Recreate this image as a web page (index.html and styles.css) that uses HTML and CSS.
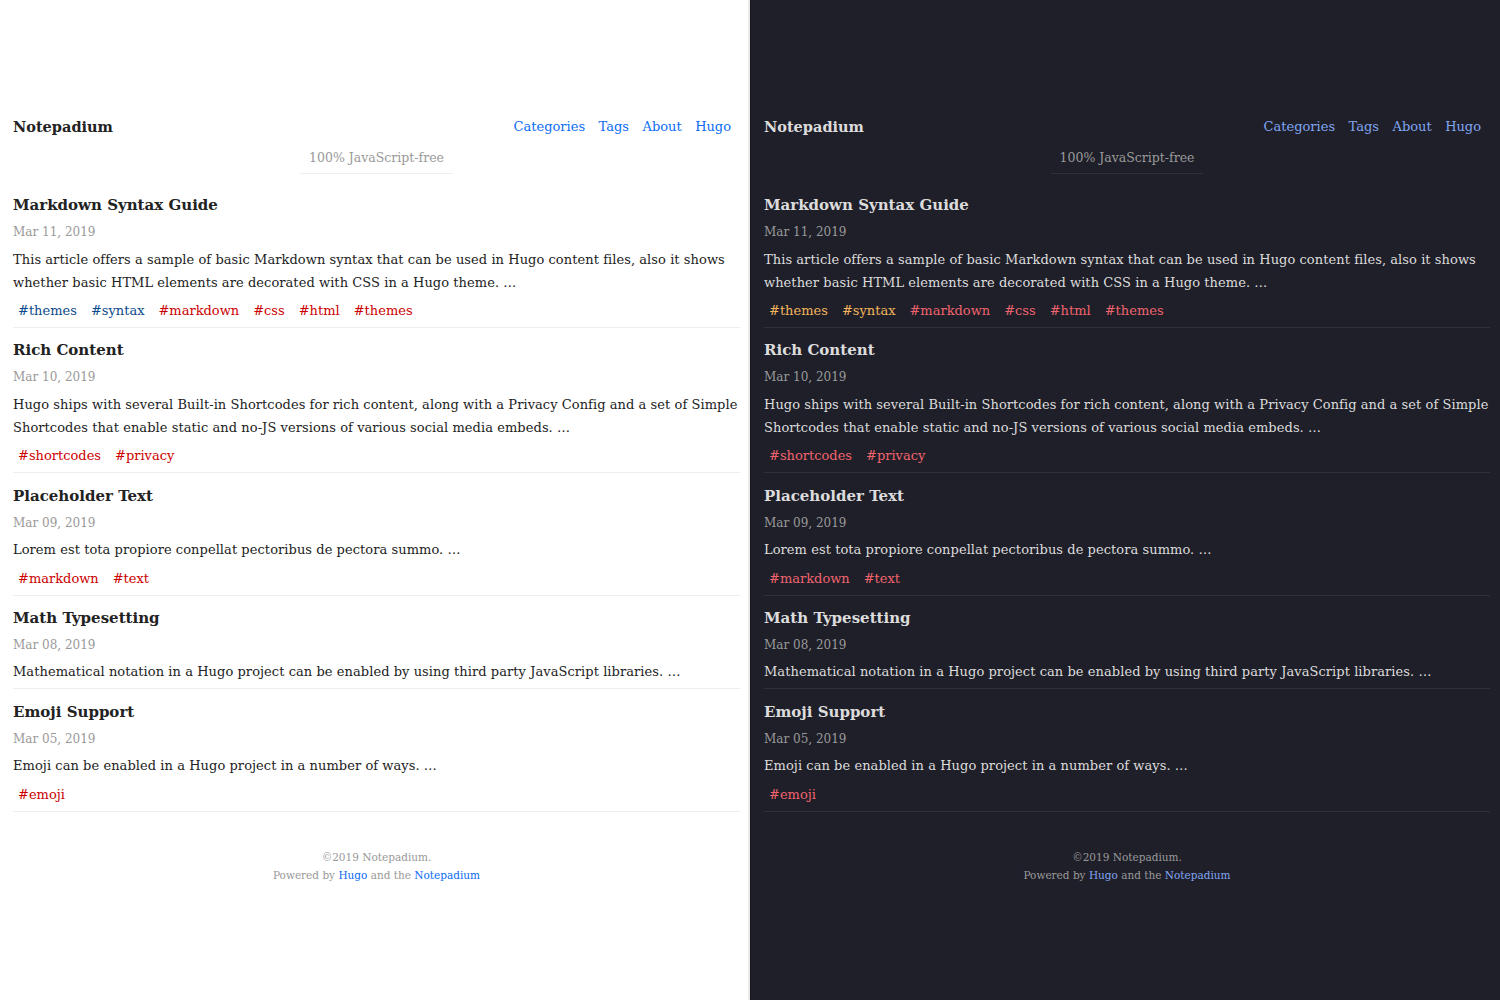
FILE: index.html
```html
<!DOCTYPE html>
<html lang="en">
<head>
<meta charset="utf-8">
<title>Notepadium</title>
<link rel="stylesheet" href="styles.css">
</head>
<body>
<div class="screens">
  <div class="panel light">
    <header class="site-header">
      <a class="brand" href="#">Notepadium</a>
      <nav class="nav">
        <a href="#">Categories</a><a href="#">Tags</a><a href="#">About</a><a href="#">Hugo</a>
      </nav>
    </header>
    <div class="tagline"><span>100% JavaScript-free</span></div>
    <main class="posts">
      <article class="post">
        <h2 class="post-title">Markdown Syntax Guide</h2>
        <div class="post-date">Mar 11, 2019</div>
        <p class="post-summary">This article offers a sample of basic Markdown syntax that can be used in Hugo content files, also it shows whether basic HTML elements are decorated with CSS in a Hugo theme. …</p>
        <div class="post-tags"><a class="tag cat" href="#">#themes</a><a class="tag cat" href="#">#syntax</a><a class="tag" href="#">#markdown</a><a class="tag" href="#">#css</a><a class="tag" href="#">#html</a><a class="tag" href="#">#themes</a></div>
      </article>
      <article class="post">
        <h2 class="post-title">Rich Content</h2>
        <div class="post-date">Mar 10, 2019</div>
        <p class="post-summary">Hugo ships with several Built-in Shortcodes for rich content, along with a Privacy Config and a set of Simple Shortcodes that enable static and no-JS versions of various social media embeds. …</p>
        <div class="post-tags"><a class="tag" href="#">#shortcodes</a><a class="tag" href="#">#privacy</a></div>
      </article>
      <article class="post">
        <h2 class="post-title">Placeholder Text</h2>
        <div class="post-date">Mar 09, 2019</div>
        <p class="post-summary">Lorem est tota propiore conpellat pectoribus de pectora summo. …</p>
        <div class="post-tags"><a class="tag" href="#">#markdown</a><a class="tag" href="#">#text</a></div>
      </article>
      <article class="post no-tags">
        <h2 class="post-title">Math Typesetting</h2>
        <div class="post-date">Mar 08, 2019</div>
        <p class="post-summary">Mathematical notation in a Hugo project can be enabled by using third party JavaScript libraries. …</p>
      </article>
      <article class="post">
        <h2 class="post-title">Emoji Support</h2>
        <div class="post-date">Mar 05, 2019</div>
        <p class="post-summary">Emoji can be enabled in a Hugo project in a number of ways. …</p>
        <div class="post-tags"><a class="tag" href="#">#emoji</a></div>
      </article>
    </main>
    <footer class="site-footer">
      <div>©2019 Notepadium.</div>
      <div>Powered by <a href="#">Hugo</a> and the <a href="#">Notepadium</a></div>
    </footer>
  </div>
  <div class="panel dark">
    <header class="site-header">
      <a class="brand" href="#">Notepadium</a>
      <nav class="nav">
        <a href="#">Categories</a><a href="#">Tags</a><a href="#">About</a><a href="#">Hugo</a>
      </nav>
    </header>
    <div class="tagline"><span>100% JavaScript-free</span></div>
    <main class="posts">
      <article class="post">
        <h2 class="post-title">Markdown Syntax Guide</h2>
        <div class="post-date">Mar 11, 2019</div>
        <p class="post-summary">This article offers a sample of basic Markdown syntax that can be used in Hugo content files, also it shows whether basic HTML elements are decorated with CSS in a Hugo theme. …</p>
        <div class="post-tags"><a class="tag cat" href="#">#themes</a><a class="tag cat" href="#">#syntax</a><a class="tag" href="#">#markdown</a><a class="tag" href="#">#css</a><a class="tag" href="#">#html</a><a class="tag" href="#">#themes</a></div>
      </article>
      <article class="post">
        <h2 class="post-title">Rich Content</h2>
        <div class="post-date">Mar 10, 2019</div>
        <p class="post-summary">Hugo ships with several Built-in Shortcodes for rich content, along with a Privacy Config and a set of Simple Shortcodes that enable static and no-JS versions of various social media embeds. …</p>
        <div class="post-tags"><a class="tag" href="#">#shortcodes</a><a class="tag" href="#">#privacy</a></div>
      </article>
      <article class="post">
        <h2 class="post-title">Placeholder Text</h2>
        <div class="post-date">Mar 09, 2019</div>
        <p class="post-summary">Lorem est tota propiore conpellat pectoribus de pectora summo. …</p>
        <div class="post-tags"><a class="tag" href="#">#markdown</a><a class="tag" href="#">#text</a></div>
      </article>
      <article class="post no-tags">
        <h2 class="post-title">Math Typesetting</h2>
        <div class="post-date">Mar 08, 2019</div>
        <p class="post-summary">Mathematical notation in a Hugo project can be enabled by using third party JavaScript libraries. …</p>
      </article>
      <article class="post">
        <h2 class="post-title">Emoji Support</h2>
        <div class="post-date">Mar 05, 2019</div>
        <p class="post-summary">Emoji can be enabled in a Hugo project in a number of ways. …</p>
        <div class="post-tags"><a class="tag" href="#">#emoji</a></div>
      </article>
    </main>
    <footer class="site-footer">
      <div>©2019 Notepadium.</div>
      <div>Powered by <a href="#">Hugo</a> and the <a href="#">Notepadium</a></div>
    </footer>
  </div>
</div>
</body>
</html>
```

FILE: styles.css
```css
* { box-sizing: border-box; }
html, body { margin: 0; padding: 0; }
body {
  font-family: "DejaVu Serif", "Liberation Serif", serif;
  width: 1500px;
  height: 1000px;
  overflow: hidden;
}
a { text-decoration: none; }

.screens { display: flex; height: 1000px; }

.panel {
  width: 750px;
  height: 1000px;
  padding: 113px 10px 0 13px;
  background: var(--bg);
  color: var(--fg);
}
.light {
  --bg: #ffffff;
  --fg: #222222;
  --muted: #999999;
  --link: #0b6cf4;
  --rule: #eeeeee;
  --tag: #cc0000;
  --cat: #0b4a8b;
  padding-right: 8px;
  border-right: 2px solid #e9e9e9;
}
.dark {
  --bg: #1f1f29;
  --fg: #dcdcdc;
  --muted: #9a9a9a;
  --link: #80a6f2;
  --rule: #30303a;
  --tag: #f0646e;
  --cat: #f2b55c;
  border-left: 1px solid #15151c;
}

.site-header {
  display: flex;
  justify-content: space-between;
  align-items: center;
  height: 26px;
}
.brand {
  color: var(--fg);
  font-weight: bold;
  font-size: 14.5px;
}
.nav { display: flex; gap: 13.5px; margin-right: 9px; }
.nav a { color: var(--link); font-size: 13px; }

.tagline {
  display: flex;
  justify-content: center;
  margin-top: 6px;
}
.tagline span {
  color: var(--muted);
  font-size: 12.5px;
  line-height: 26px;
  padding: 0 9px 2px;
  border-bottom: 1px solid var(--rule);
}

.posts { margin-top: 17px; }
.post {
  border-bottom: 1px solid var(--rule);
  padding-bottom: 5px;
  margin-bottom: 8.3px;
}
.post.no-tags { padding-bottom: 5px; }
.post-title {
  margin: 0;
  font-size: 15px;
  line-height: 28px;
  font-weight: bold;
  color: var(--fg);
}
.post-date {
  color: var(--muted);
  font-size: 12px;
  line-height: 26px;
}
.post-summary {
  margin: 0;
  font-size: 13px;
  line-height: 23px;
  letter-spacing: 0.06px;
  padding-top: 2.5px;
}
.post-tags {
  display: flex;
  gap: 14px;
  padding: 6.5px 0 0 5px;
  line-height: 22px;
  font-size: 13px;
}
.tag { color: var(--tag); }
.tag.cat { color: var(--cat); }

.site-footer {
  margin-top: 36px;
  text-align: center;
  color: var(--muted);
  font-size: 10.5px;
  line-height: 18px;
}
.site-footer a { color: var(--link); }
```
